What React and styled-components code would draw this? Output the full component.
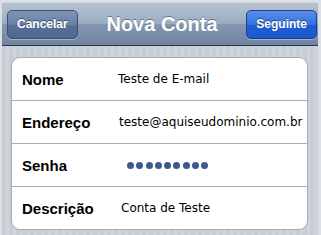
import React from "react";
import styled, { createGlobalStyle } from "styled-components";

const Global = createGlobalStyle`
html, body {
  margin: 0;
  padding: 0;
  background: #d9dde2;
}
#root {
  width: 321px;
  height: 235px;
  overflow: hidden;
}
`

const Screen = styled.div`
width: 321px;
height: 235px;
box-sizing: border-box;
padding: 2px 3px 0 2px;
background: #dcdfe3;
`

const NavBar = styled.div`
height: 42px;
display: flex;
align-items: center;
justify-content: space-between;
padding: 0 1px 0 5px;
background: linear-gradient(#b7c3d2 0%, #9aabc1 50%, #8497b1 51%, #6f84a2 100%);
border-top: 1px solid #cdd5df;
border-bottom: 1px solid #2d3642;
`

const NavButton = styled.div`
height: 27px;
padding: 0 9px;
display: flex;
align-items: center;
border-radius: 5px;
border: 1px solid ${p => p.blue ? "#1d3f8a" : "#3d5070"};
background: ${p => p.blue
  ? "linear-gradient(#5a8ee8 0%, #3571e0 50%, #1f5cd6 51%, #1d58cf 100%)"
  : "linear-gradient(#8096b6 0%, #6880a4 50%, #567096 51%, #4f6890 100%)"};
box-shadow: 0 1px 0 rgba(255,255,255,0.35);
color: #fff;
font-family: "Liberation Sans", Arial, sans-serif;
font-weight: bold;
font-size: 12px;
text-shadow: 0 -1px 0 rgba(0,0,0,0.45);
`

const Title = styled.div`
color: #fff;
font-family: "Liberation Sans", Arial, sans-serif;
font-weight: bold;
font-size: 20px;
text-shadow: 0 -1px 0 rgba(40,50,70,0.5);
`

const Body = styled.div`
height: 190px;
box-sizing: border-box;
padding: 11px 10px 0 9px;
background: repeating-linear-gradient(90deg, #c6cdd5 0px, #c6cdd5 4px, #ced4db 4px, #ced4db 7px);
`

const Card = styled.div`
background: #fff;
border: 1px solid #a6abb2;
border-radius: 9px;
overflow: hidden;
`

const Row = styled.div`
height: 42px;
display: flex;
align-items: center;
padding-left: 10px;
border-top: ${p => p.first ? "none" : "1px solid #a9acb1"};
`

const Label = styled.div`
width: 96px;
font-family: "Liberation Sans", Arial, sans-serif;
font-weight: bold;
font-size: 15px;
color: #000;
`

const Value = styled.div`
font-family: "DejaVu Sans", Verdana, sans-serif;
font-size: 12px;
color: #000;
padding-left: ${p => p.pad || 0}px;
white-space: nowrap;
`

const Dots = styled.div`
display: flex;
gap: 2.3px;
padding-left: 9px;
`

const Dot = styled.span`
width: 7px;
height: 7px;
border-radius: 50%;
background: #3d5a8e;
`

const rows = [
  { label: "Nome", value: "Teste de E-mail", pad: 0 },
  { label: "Endereço", value: "teste@aquiseudominio.com.br", pad: 1 },
  { label: "Senha", dots: 9 },
  { label: "Descrição", value: "Conta de Teste", pad: 3 },
];

export default function App() {
  return (
    <Screen>
      <Global />
      <NavBar>
        <NavButton>Cancelar</NavButton>
        <Title>Nova Conta</Title>
        <NavButton blue>Seguinte</NavButton>
      </NavBar>
      <Body>
        <Card>
          {rows.map((r, i) => (
            <Row key={r.label} first={i === 0}>
              <Label>{r.label}</Label>
              {r.dots ? (
                <Dots>
                  {Array.from({ length: r.dots }).map((_, j) => <Dot key={j} />)}
                </Dots>
              ) : (
                <Value pad={r.pad}>{r.value}</Value>
              )}
            </Row>
          ))}
        </Card>
      </Body>
    </Screen>
  );
}
